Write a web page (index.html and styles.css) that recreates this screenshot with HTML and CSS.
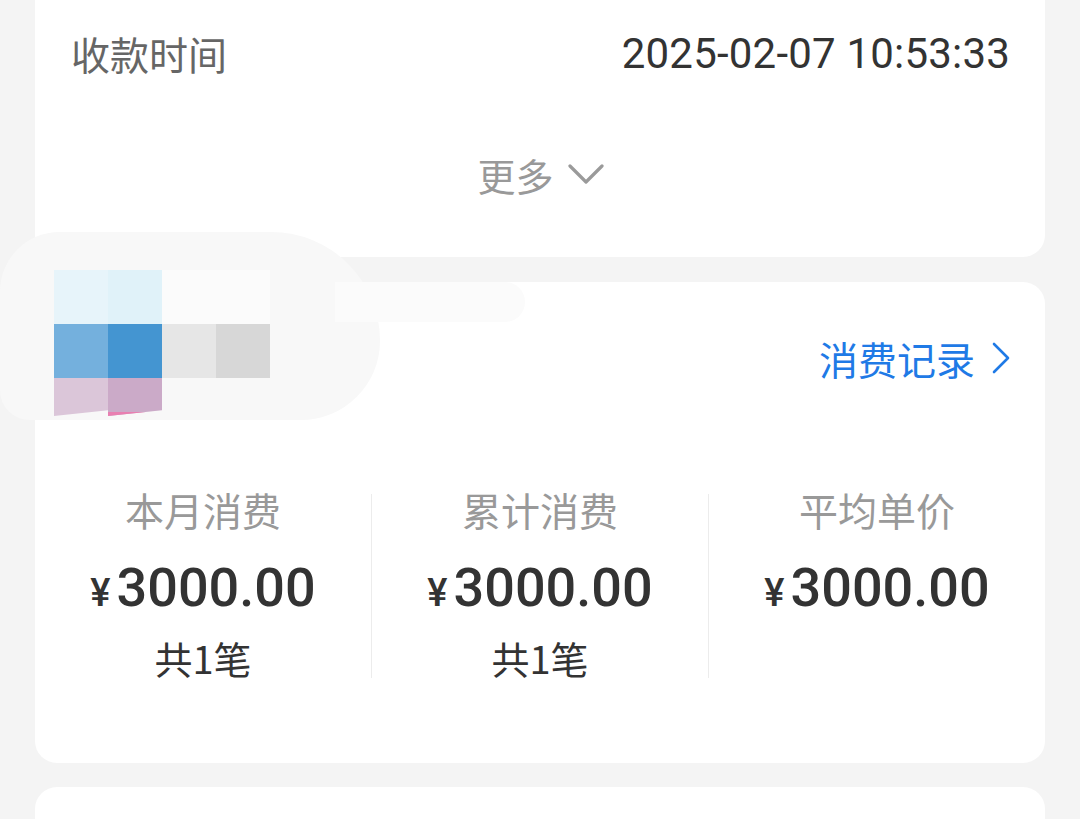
FILE: index.html
```html
<!DOCTYPE html>
<html lang="zh-CN">
<head>
  <meta charset="UTF-8" />
  <meta name="viewport" content="width=device-width, initial-scale=1.0" />
  <title>收款详情</title>
  <link rel="stylesheet" href="styles.css">
</head>
<body>
  <div class="page">
    <!-- 收款信息 -->
    <div class="card card-info">
      <div class="info-row">
        <span class="info-label">收款时间</span>
        <span class="info-value">2025-02-07 10:53:33</span>
      </div>
      <div class="more-row">
        <span>更多</span>
        <svg class="more-arrow" width="36" height="22" viewBox="0 0 36 22">
          <path d="M2 3 L18 19 L34 3" fill="none" stroke="#9a9a9a" stroke-width="3.2" stroke-linecap="round" stroke-linejoin="round"/>
        </svg>
      </div>
    </div>

    <!-- 顾客消费 -->
    <div class="card card-customer">
      <!-- 打码的头像 -->
      <div class="smudge smudge-main"></div>
      <div class="smudge smudge-tail"></div>
      <div class="avatar-mosaic">
        <div class="cell" style="background:#e7f4fa"></div>
        <div class="cell" style="background:#e0f2f9"></div>
        <div class="cell" style="background:#fbfbfb"></div>
        <div class="cell" style="background:#fbfbfb"></div>
        <div class="cell" style="background:#74b0dd"></div>
        <div class="cell" style="background:#4495d1"></div>
        <div class="cell" style="background:#e6e6e6"></div>
        <div class="cell" style="background:#d7d7d7"></div>
        <div class="cell cell-low" style="background:#dbc6d9"></div>
        <div class="cell cell-low cell-pink" style="background:#cbaac8"></div>
      </div>

      <div class="customer-head">
        <a class="record-link" href="#">消费记录
          <svg width="20" height="32" viewBox="0 0 20 32">
            <path d="M3 2 L17 16 L3 30" fill="none" stroke="#1f7ae6" stroke-width="2.6" stroke-linecap="round" stroke-linejoin="round"/>
          </svg>
        </a>
      </div>

      <div class="stats">
        <div class="stat">
          <div class="stat-label">本月消费</div>
          <div class="stat-amount"><span class="yen">¥</span>3000.00</div>
          <div class="stat-count">共1笔</div>
        </div>
        <div class="stat">
          <div class="stat-label">累计消费</div>
          <div class="stat-amount"><span class="yen">¥</span>3000.00</div>
          <div class="stat-count">共1笔</div>
        </div>
        <div class="stat">
          <div class="stat-label">平均单价</div>
          <div class="stat-amount"><span class="yen">¥</span>3000.00</div>
        </div>
      </div>
    </div>

    <div class="card card-next"></div>
  </div>
</body>
</html>
```

FILE: styles.css
```css
body {
  margin: 0;
  padding: 0;
  background-color: #f4f4f4;
  font-family: "Noto Sans CJK SC", "Noto Sans", sans-serif;
  overflow: hidden;
}
.page {
  padding: 0 35px;
}
.card {
  background: white;
  border-radius: 22px;
  margin-bottom: 24px;
  position: relative;
}

/* 收款信息 */
.card-info {
  margin-top: -20px;
  margin-bottom: 25px;
  padding: 48px 35px 58px 36px;
}
.info-row {
  display: flex;
  justify-content: space-between;
  align-items: center;
  height: 50px;
}
.info-label {
  font-size: 39px;
  color: #666;
}
.info-value {
  font-family: Roboto, sans-serif;
  font-size: 42px;
  color: #333;
  letter-spacing: 0.2px;
}
.more-row {
  margin-top: 71px;
  height: 50px;
  display: flex;
  justify-content: center;
  align-items: center;
  gap: 14px;
  font-size: 38px;
  color: #999;
}

/* 顾客消费 */
.card-customer {
  padding-bottom: 85px;
}
.smudge {
  position: absolute;
  background: #f9f9f9;
}
.smudge-main {
  left: -35px;
  top: -50px;
  width: 380px;
  height: 188px;
  border-radius: 60px 110px 80px 30px;
  background: #f8f8f8;
}
.smudge-tail {
  left: 300px;
  top: 0;
  width: 190px;
  height: 40px;
  border-radius: 0 40px 40px 0;
  background: #fbfbfb;
}
.avatar-mosaic {
  position: absolute;
  left: 19px;
  top: -12px;
  display: grid;
  grid-template-columns: repeat(4, 54px);
  grid-template-rows: 54px 54px 38px;
}
.cell-low {
  clip-path: polygon(0 0, 100% 0, 100% 85%, 0 100%);
}
.cell-pink {
  box-shadow: inset 0 -4px 0 #e97fb1;
}
.customer-head {
  height: 152px;
  padding-bottom: 8px;
  display: flex;
  justify-content: flex-end;
  align-items: center;
  padding-right: 34px;
  position: relative;
}
.record-link {
  display: flex;
  align-items: center;
  gap: 16px;
  font-size: 39px;
  color: #1f7ae6;
  text-decoration: none;
}
.stats {
  margin-top: 52px;
  display: flex;
}
.stat {
  flex: 1;
  text-align: center;
}
.stat + .stat {
  border-left: 1px solid #ececec;
}
.stat-label {
  font-size: 39px;
  line-height: 30px;
  color: #999;
}
.stat-amount {
  margin-top: 36px;
  font-family: Roboto, sans-serif;
  font-weight: 500;
  font-size: 54px;
  line-height: 56px;
  color: #333;
}
.yen {
  font-size: 38px;
  margin-right: 6px;
}
.stat-count {
  margin-top: 17px;
  font-size: 38px;
  line-height: 40px;
  color: #333;
}
.card-next {
  height: 80px;
  margin-bottom: 0;
}
```
